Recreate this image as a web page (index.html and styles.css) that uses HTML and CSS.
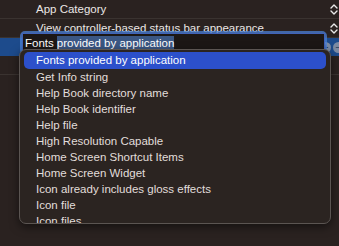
FILE: index.html
```html
<!DOCTYPE html>
<html lang="en">
  <head>
    <meta charset="UTF-8" />
    <meta name="viewport" content="width=device-width, initial-scale=1.0" />
    <title>Info.plist keys</title>
    <link rel="stylesheet" href="styles.css">
  </head>
  <body>
    <div class="plist">
      <div class="row">
        <span class="key">App Category</span>
        <svg class="stepper" width="8" height="11" viewBox="0 0 8 11">
          <path d="M1 4 L4 1 L7 4 M1 7 L4 10 L7 7" />
        </svg>
      </div>
      <div class="row">
        <span class="key">View controller-based status bar appearance</span>
        <svg class="stepper" width="8" height="11" viewBox="0 0 8 11">
          <path d="M1 4 L4 1 L7 4 M1 7 L4 10 L7 7" />
        </svg>
      </div>
      <div class="row selected">
        <div class="row-buttons">
          <span class="circle-btn">+</span>
          <span class="circle-btn">&minus;</span>
        </div>
      </div>
      <div class="row"></div>
    </div>

    <!-- inline editor over the selected row -->
    <div class="editor">
      <div class="editor-field">Fonts<span class="sel">provided by application</span></div>
    </div>

    <!-- completion popup -->
    <div class="popup">
      <ul class="popup-list">
        <li class="active">Fonts provided by application</li>
        <li>Get Info string</li>
        <li>Help Book directory name</li>
        <li>Help Book identifier</li>
        <li>Help file</li>
        <li>High Resolution Capable</li>
        <li>Home Screen Shortcut Items</li>
        <li>Home Screen Widget</li>
        <li>Icon already includes gloss effects</li>
        <li>Icon file</li>
        <li>Icon files</li>
        <li>Icon files (iOS 5)</li>
      </ul>
    </div>
  </body>
</html>
```

FILE: styles.css
```css
body {
  margin: 0;
  padding: 0;
  background-color: #2a2220;
  font-family: "Liberation Sans", Arial, sans-serif;
  font-size: 11.5px;
  color: #eae7e5;
  height: 246px;
  overflow: hidden;
  position: relative;
}

.plist {
  display: flex;
  flex-direction: column;
}

.row {
  height: 18px;
  display: flex;
  align-items: center;
  padding-left: 36px;
  padding-right: 1px;
  border-bottom: 1px solid #3a3330;
}

.row .key {
  flex: 1;
}

.row.selected {
  background-color: #1d4b8c;
  border-bottom: none;
}

.stepper {
  fill: none;
  stroke: #e8e8e8;
  stroke-width: 1.4;
  stroke-linecap: round;
  stroke-linejoin: round;
}

.row-buttons {
  margin-left: auto;
  display: flex;
  gap: 2px;
  margin-right: -6px;
}

.circle-btn {
  width: 11px;
  height: 11px;
  border-radius: 50%;
  background-color: #7c8ba3;
  color: #2a3a55;
  font-size: 10px;
  line-height: 11px;
  text-align: center;
}

.editor {
  position: absolute;
  left: 20px;
  top: 31px;
  width: 301px;
  height: 18px;
  border: 3px solid rgba(74, 128, 212, 0.75);
  border-radius: 5px;
  padding: 0;
}

.editor-field {
  height: 18px;
  line-height: 18px;
  background-color: #1c1715;
  border: 1px solid #4163b8;
  margin: -1px;
  padding-left: 2px;
  color: #ffffff;
  white-space: nowrap;
}

.editor-field .sel {
  background-color: #3b5784;
  margin-left: 3px;
  padding: 1px 0;
}

.popup {
  position: absolute;
  left: 19px;
  top: 49px;
  width: 310px;
  height: 173px;
  background-color: #2b2421;
  border: 1px solid #5b5552;
  border-radius: 7px;
  box-shadow: 0 3px 10px rgba(0, 0, 0, 0.5);
  overflow: hidden;
}

.popup-list {
  list-style: none;
  margin: 0;
  padding: 2px 4px 0;
}

.popup-list li {
  height: 16px;
  line-height: 16px;
  padding-left: 12px;
  color: #e2dedb;
  white-space: nowrap;
}

.popup-list li.active {
  height: 17px;
  line-height: 17px;
  background-color: #2c50cb;
  color: #ffffff;
  border-radius: 5px;
}
```
